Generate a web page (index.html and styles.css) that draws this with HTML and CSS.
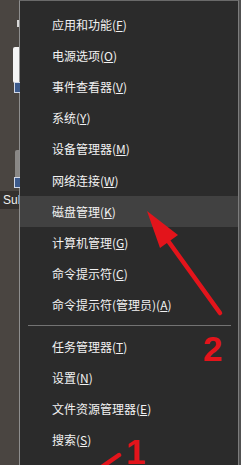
FILE: index.html
```html
<!DOCTYPE html>
<html lang="zh-CN">
<head>
<meta charset="utf-8">
<link rel="stylesheet" href="styles.css">
</head>
<body>
<div class="screen">
  <div class="desktop">
    <div class="icon-mark"></div>
    <div class="icon-card"></div>
    <div class="icon-blue icon-blue-1"></div>
    <div class="icon-bar"></div>
    <div class="icon-blue icon-blue-2"></div>
    <div class="icon-label">Sul</div>
  </div>
  <div class="menu">
    <div class="item">应用和功能(<u>F</u>)</div>
    <div class="item">电源选项(<u>O</u>)</div>
    <div class="item">事件查看器(<u>V</u>)</div>
    <div class="item">系统(<u>Y</u>)</div>
    <div class="item">设备管理器(<u>M</u>)</div>
    <div class="item">网络连接(<u>W</u>)</div>
    <div class="item active">磁盘管理(<u>K</u>)</div>
    <div class="item">计算机管理(<u>G</u>)</div>
    <div class="item">命令提示符(<u>C</u>)</div>
    <div class="item">命令提示符(管理员)(<u>A</u>)</div>
    <div class="sep"></div>
    <div class="item">任务管理器(<u>T</u>)</div>
    <div class="item">设置(<u>N</u>)</div>
    <div class="item">文件资源管理器(<u>E</u>)</div>
    <div class="item">搜索(<u>S</u>)</div>
  </div>
  <div class="edge"></div>
  <svg class="marks" width="241" height="465" viewBox="0 0 241 465">
    <line x1="166" y1="238" x2="220" y2="313" stroke="#e3141b" stroke-width="4.5" stroke-linecap="round"/>
    <polygon points="147,211 178,235 160,248" fill="#e3141b"/>
    <text x="203" y="361" class="num">2</text>
    <line x1="119" y1="455" x2="96" y2="471" stroke="#e3141b" stroke-width="4.5" stroke-linecap="round"/>
    <text x="126" y="464" class="num">1</text>
  </svg>
</div>
</body>
</html>
```

FILE: styles.css
```css
html, body {
  margin: 0;
  padding: 0;
}
body {
  width: 241px;
  height: 465px;
  overflow: hidden;
  background: #4a4541;
  font-family: "Noto Sans CJK SC", "Noto Sans", sans-serif;
}
.screen {
  position: relative;
  display: flex;
  width: 241px;
  height: 465px;
}
.desktop {
  position: relative;
  width: 19px;
  flex: none;
  background: #4a4541;
}
.icon-mark {
  position: absolute;
  left: 17px;
  top: 20px;
  width: 2px;
  height: 7px;
  background: #d8d8d8;
}
.icon-card {
  position: absolute;
  left: 13px;
  top: 47px;
  width: 6px;
  height: 36px;
  background: #f4f4f4;
  border-radius: 2px 0 0 2px;
}
.icon-blue {
  position: absolute;
  left: 14px;
  width: 5px;
  height: 9px;
  background: #3c5a8c;
  border: 1px solid #d0d8e8;
  border-right: none;
}
.icon-blue-1 { top: 82px; }
.icon-blue-2 { top: 177px; }
.icon-bar {
  position: absolute;
  left: 15px;
  top: 150px;
  width: 4px;
  height: 27px;
  background: #8a8886;
  border-radius: 2px 0 0 0;
}
.icon-label {
  position: absolute;
  left: 0;
  top: 191px;
  width: 19px;
  height: 18px;
  padding-left: 3px;
  box-sizing: border-box;
  background: #34302d;
  color: #f0f0f0;
  font-family: "Liberation Sans", sans-serif;
  font-size: 12px;
  line-height: 18px;
  overflow: hidden;
  white-space: nowrap;
}
.menu {
  width: 218px;
  flex: none;
  background: #2b2b2b;
  border-left: 1px solid #8e8e8e;
  border-right: 1px solid #7c7c7c;
  border-top: 1px solid #6a6a6a;
  padding-top: 8px;
  box-sizing: content-box;
}
.item {
  height: 31.2px;
  display: flex;
  align-items: center;
  padding-left: 32px;
  color: #f2f2f2;
  font-size: 12px;
  line-height: 1;
  white-space: nowrap;
}
.item u {
  text-decoration: underline;
  text-underline-offset: 1px;
}
.item.active {
  background: #414141;
}
.sep {
  height: 1px;
  margin: 4.6px 7px 4.8px 8px;
  background: #737373;
}
.edge {
  width: 2px;
  flex: none;
  background: #505050;
}
.marks {
  position: absolute;
  left: 0;
  top: 0;
}
.num {
  fill: #e3141b;
  font-family: "Liberation Sans", sans-serif;
  font-weight: bold;
  font-size: 35px;
}
```
